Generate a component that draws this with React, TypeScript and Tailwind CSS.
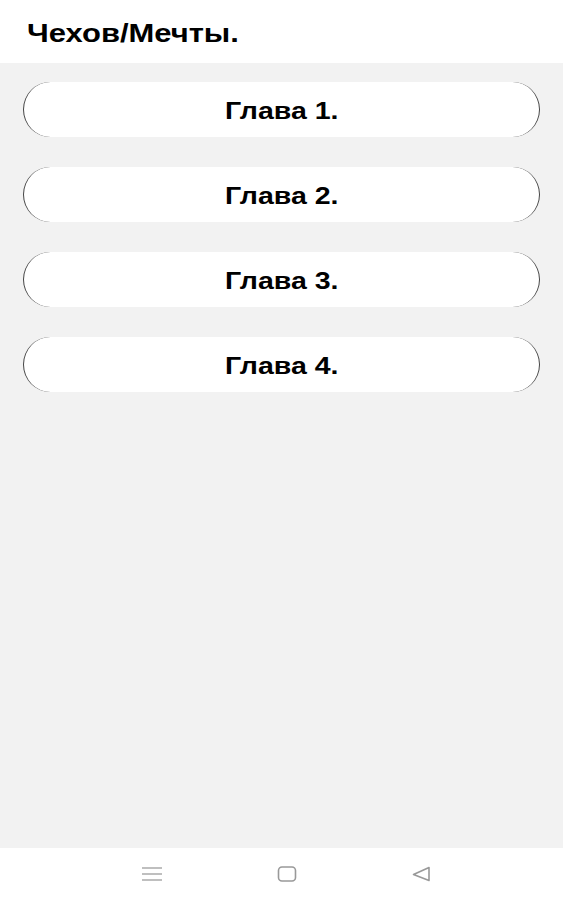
import React from "react";

export default function App() {
  const chapters = ["Глава 1.", "Глава 2.", "Глава 3.", "Глава 4."];
  return (
    <div className="w-[563px] h-[900px] flex flex-col bg-[#f2f2f2]" style={{ fontFamily: '"Liberation Sans", Arial, sans-serif' }}>
      <div className="h-[63px] bg-white flex items-center pl-[27px] pt-[3px] shrink-0">
        <span className="inline-block text-[26px] leading-none font-bold text-black origin-left scale-x-[1.19]">Чехов/Мечты.</span>
      </div>
      <div className="flex-1 flex flex-col gap-[30px] px-[23px] pt-[19px]">
        {chapters.map((c) => (
          <div
            key={c}
            className="h-[55px] bg-white rounded-[28px] border-x-[1.5px] border-y-0 border-[#444] flex items-center justify-center"
          >
            <span className="inline-block mt-[4px] text-[23px] leading-none font-bold text-black scale-x-[1.24]">{c}</span>
          </div>
        ))}
      </div>
      <div className="h-[52px] bg-white shrink-0 flex items-center justify-between pl-[141px] pr-[132px]">
        <svg width="22" height="18" viewBox="0 0 22 18" className="text-[#aaa]">
          <path d="M1 3h20M1 9h20M1 15h20" stroke="currentColor" strokeWidth="1.6" />
        </svg>
        <svg width="20" height="18" viewBox="0 0 20 18" className="text-[#999]">
          <rect x="1.5" y="2" width="17" height="14" rx="3.5" fill="none" stroke="currentColor" strokeWidth="1.6" />
        </svg>
        <svg width="20" height="18" viewBox="0 0 20 18" className="text-[#999]">
          <path d="M18 2.5L2.5 9.5L18 15.5Z" fill="none" stroke="currentColor" strokeWidth="1.6" strokeLinejoin="round" />
        </svg>
      </div>
    </div>
  );
}
